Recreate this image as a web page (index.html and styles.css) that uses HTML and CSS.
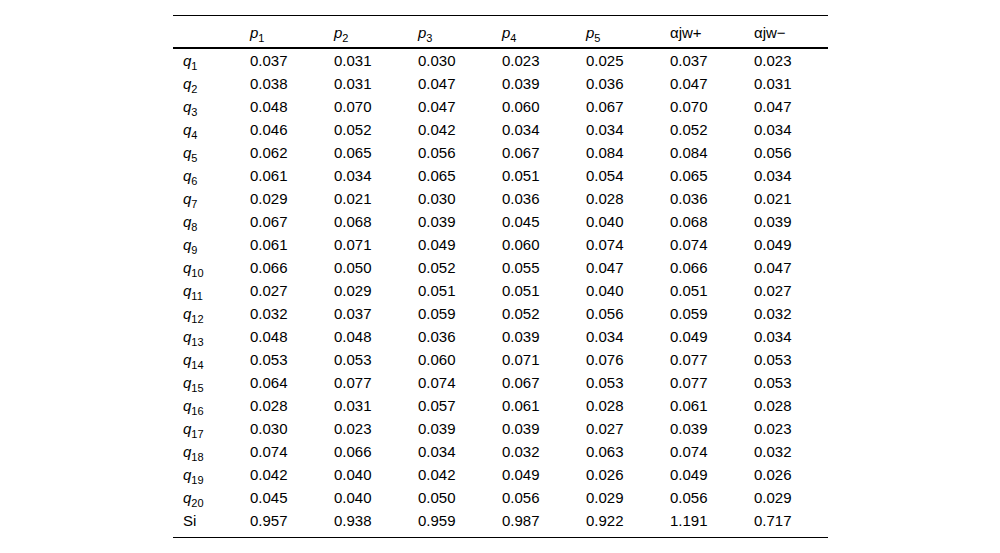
FILE: index.html
```html
<!DOCTYPE html>
<html>
<head>
<meta charset="utf-8">
<link rel="stylesheet" href="styles.css">
</head>
<body>
<div class="wrap">
<table class="data">
<thead>
<tr><th></th><th><i>p</i><sub>1</sub></th><th><i>p</i><sub>2</sub></th><th><i>p</i><sub>3</sub></th><th><i>p</i><sub>4</sub></th><th><i>p</i><sub>5</sub></th><th>αjw+</th><th>αjw−</th></tr>
</thead>
<tbody>
<tr><td><i>q</i><sub>1</sub></td><td>0.037</td><td>0.031</td><td>0.030</td><td>0.023</td><td>0.025</td><td>0.037</td><td>0.023</td></tr>
<tr><td><i>q</i><sub>2</sub></td><td>0.038</td><td>0.031</td><td>0.047</td><td>0.039</td><td>0.036</td><td>0.047</td><td>0.031</td></tr>
<tr><td><i>q</i><sub>3</sub></td><td>0.048</td><td>0.070</td><td>0.047</td><td>0.060</td><td>0.067</td><td>0.070</td><td>0.047</td></tr>
<tr><td><i>q</i><sub>4</sub></td><td>0.046</td><td>0.052</td><td>0.042</td><td>0.034</td><td>0.034</td><td>0.052</td><td>0.034</td></tr>
<tr><td><i>q</i><sub>5</sub></td><td>0.062</td><td>0.065</td><td>0.056</td><td>0.067</td><td>0.084</td><td>0.084</td><td>0.056</td></tr>
<tr><td><i>q</i><sub>6</sub></td><td>0.061</td><td>0.034</td><td>0.065</td><td>0.051</td><td>0.054</td><td>0.065</td><td>0.034</td></tr>
<tr><td><i>q</i><sub>7</sub></td><td>0.029</td><td>0.021</td><td>0.030</td><td>0.036</td><td>0.028</td><td>0.036</td><td>0.021</td></tr>
<tr><td><i>q</i><sub>8</sub></td><td>0.067</td><td>0.068</td><td>0.039</td><td>0.045</td><td>0.040</td><td>0.068</td><td>0.039</td></tr>
<tr><td><i>q</i><sub>9</sub></td><td>0.061</td><td>0.071</td><td>0.049</td><td>0.060</td><td>0.074</td><td>0.074</td><td>0.049</td></tr>
<tr><td><i>q</i><sub>10</sub></td><td>0.066</td><td>0.050</td><td>0.052</td><td>0.055</td><td>0.047</td><td>0.066</td><td>0.047</td></tr>
<tr><td><i>q</i><sub>11</sub></td><td>0.027</td><td>0.029</td><td>0.051</td><td>0.051</td><td>0.040</td><td>0.051</td><td>0.027</td></tr>
<tr><td><i>q</i><sub>12</sub></td><td>0.032</td><td>0.037</td><td>0.059</td><td>0.052</td><td>0.056</td><td>0.059</td><td>0.032</td></tr>
<tr><td><i>q</i><sub>13</sub></td><td>0.048</td><td>0.048</td><td>0.036</td><td>0.039</td><td>0.034</td><td>0.049</td><td>0.034</td></tr>
<tr><td><i>q</i><sub>14</sub></td><td>0.053</td><td>0.053</td><td>0.060</td><td>0.071</td><td>0.076</td><td>0.077</td><td>0.053</td></tr>
<tr><td><i>q</i><sub>15</sub></td><td>0.064</td><td>0.077</td><td>0.074</td><td>0.067</td><td>0.053</td><td>0.077</td><td>0.053</td></tr>
<tr><td><i>q</i><sub>16</sub></td><td>0.028</td><td>0.031</td><td>0.057</td><td>0.061</td><td>0.028</td><td>0.061</td><td>0.028</td></tr>
<tr><td><i>q</i><sub>17</sub></td><td>0.030</td><td>0.023</td><td>0.039</td><td>0.039</td><td>0.027</td><td>0.039</td><td>0.023</td></tr>
<tr><td><i>q</i><sub>18</sub></td><td>0.074</td><td>0.066</td><td>0.034</td><td>0.032</td><td>0.063</td><td>0.074</td><td>0.032</td></tr>
<tr><td><i>q</i><sub>19</sub></td><td>0.042</td><td>0.040</td><td>0.042</td><td>0.049</td><td>0.026</td><td>0.049</td><td>0.026</td></tr>
<tr><td><i>q</i><sub>20</sub></td><td>0.045</td><td>0.040</td><td>0.050</td><td>0.056</td><td>0.029</td><td>0.056</td><td>0.029</td></tr>
<tr class="last"><td>Si</td><td>0.957</td><td>0.938</td><td>0.959</td><td>0.987</td><td>0.922</td><td>1.191</td><td>0.717</td></tr>
</tbody>
</table>
</div>
</body>
</html>
```
FILE: styles.css
```css
html, body {
  margin: 0;
  padding: 0;
  background: #fff;
}
body {
  font-family: "Liberation Sans", Arial, sans-serif;
  font-size: 15px;
  color: #000;
}
.wrap {
  display: flex;
  justify-content: center;
  padding-top: 15px;
}
.data {
  border-collapse: collapse;
  border-top: 1px solid #000;
  border-bottom: 1px solid #000;
  margin-left: 1px;
}
.data th, .data td {
  font-weight: normal;
  text-align: left;
  padding: 0 0 0 10px;
  height: 23px;
  line-height: 17px;
  vertical-align: middle;
  white-space: nowrap;
}
.data th {
  height: 29px;
  padding-top: 2px;
  border-bottom: 2px solid #000;
}
.data th:first-child, .data td:first-child {
  width: 57px;
}
.data th + th, .data td + td {
  width: 74px;
}
.data tr.last td {
  padding-bottom: 5px;
}
sub {
  font-size: 11px;
  line-height: 0;
  vertical-align: -4px;
}
```
